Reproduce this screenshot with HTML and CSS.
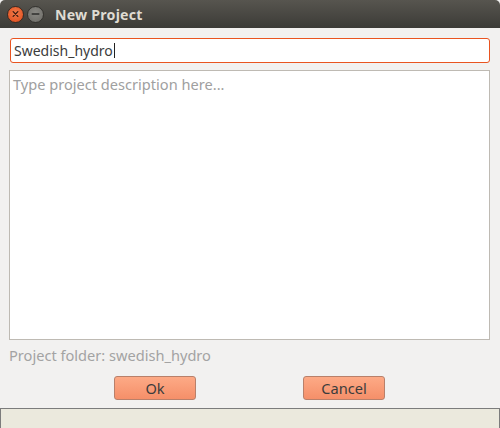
FILE: index.html
```html
<!DOCTYPE html>
<html>
<head>
<meta charset="utf-8">
<link rel="stylesheet" href="styles.css">
</head>
<body>
<div class="window">
  <div class="titlebar">
    <span class="wbtn close">
      <svg width="16" height="16" viewBox="0 0 16 16"><path d="M5.5 5.5 L10.5 10.5 M10.5 5.5 L5.5 10.5" stroke="#3a1a10" stroke-width="1.4" stroke-linecap="round"/></svg>
    </span>
    <span class="wbtn min">
      <svg width="16" height="16" viewBox="0 0 16 16"><path d="M4.5 8 L11.5 8" stroke="#2e2e2c" stroke-width="1.6" stroke-linecap="round"/></svg>
    </span>
    <span class="title">New Project</span>
  </div>
  <div class="content">
    <div class="name-field"><span class="name-text">Swedish_hydro</span><span class="caret"></span></div>
    <div class="desc">Type project description here...</div>
    <div class="folder">Project folder: swedish_hydro</div>
    <div class="buttons">
      <button class="btn">Ok</button>
      <button class="btn">Cancel</button>
    </div>
  </div>
  <div class="status"></div>
</div>
</body>
</html>
```
FILE: styles.css
```css
html, body {
  margin: 0;
  padding: 0;
  background: #f2f1f0;
}
body {
  font-family: "Noto Sans", "DejaVu Sans", sans-serif;
  font-size: 13px;
}
.window {
  width: 500px;
  height: 428px;
  display: flex;
  flex-direction: column;
  background: #f2f1f0;
  overflow: hidden;
}
.titlebar {
  height: 28px;
  flex: none;
  display: flex;
  align-items: center;
  background: linear-gradient(#57554f, #3c3b37);
  border-radius: 5px 5px 0 0;
  padding-left: 7px;
  box-sizing: border-box;
}
.wbtn {
  width: 17px;
  height: 17px;
  border-radius: 50%;
  display: flex;
  align-items: center;
  justify-content: center;
  margin-right: 3px;
  box-sizing: border-box;
}
.close {
  background: radial-gradient(circle at 50% 40%, #f27a4a, #df4b1a);
  border: 1px solid #3a2a22;
}
.min {
  background: radial-gradient(circle at 50% 40%, #8a8984, #6b6a65);
  border: 1px solid #33322e;
}
.title {
  color: #dfdbd2;
  font-weight: bold;
  font-size: 14.2px;
  margin-left: 8px;
  letter-spacing: 0.2px;
}
.content {
  flex: 1;
  display: flex;
  flex-direction: column;
  padding: 10px 10px 0 9px;
}
.name-field {
  height: 25px;
  flex: none;
  box-sizing: border-box;
  margin-left: 1px;
  border: 1px solid #e95420;
  border-radius: 3px;
  background: #fff;
  display: flex;
  align-items: center;
  padding-left: 3px;
  color: #3c3c3c;
  font-size: 14px;
}
.caret {
  width: 1px;
  height: 15px;
  background: #222;
  margin-left: 1px;
}
.desc {
  margin-top: 7px;
  height: 270px;
  flex: none;
  box-sizing: border-box;
  border: 1px solid #bebab3;
  background: #fff;
  color: #a0a0a0;
  padding: 3px 3px;
  font-size: 14.6px;
}
.folder {
  margin-top: 6px;
  color: #a3a3a3;
  font-size: 14.6px;
  height: 18px;
  line-height: 18px;
  flex: none;
}
.buttons {
  margin-top: 12px;
  display: flex;
  padding-left: 105px;
  gap: 107px;
  flex: none;
}
.btn {
  width: 82px;
  height: 24px;
  border: 1px solid #b9806a;
  border-radius: 3px;
  background: linear-gradient(#fdaa86, #f58f69);
  color: #3c3c3c;
  font-family: "Noto Sans", "DejaVu Sans", sans-serif;
  font-size: 14.6px;
  padding: 0;
}
.status {
  height: 20px;
  flex: none;
  box-sizing: border-box;
  background: #ebe9dd;
  border: 1px solid #7c7c7c;
  border-bottom: none;
}
```
